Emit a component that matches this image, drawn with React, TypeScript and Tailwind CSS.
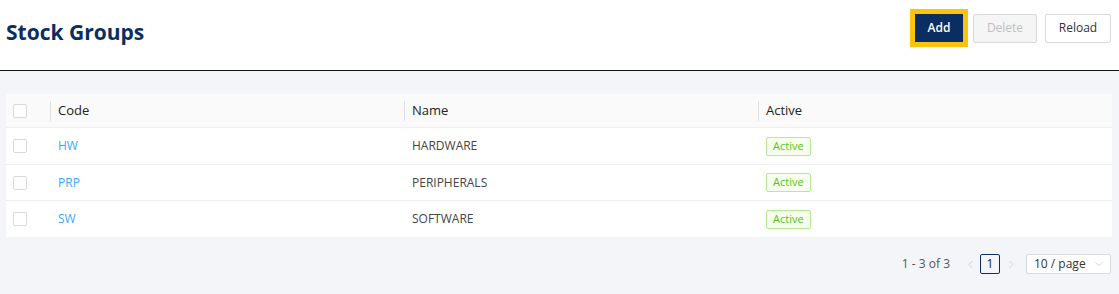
import { ChevronLeft, ChevronRight, ChevronDown } from "lucide-react";

interface StockGroup {
  code: string;
  name: string;
  active: boolean;
}

const rows: StockGroup[] = [
  { code: "HW", name: "HARDWARE", active: true },
  { code: "PRP", name: "PERIPHERALS", active: true },
  { code: "SW", name: "SOFTWARE", active: true },
];

function Checkbox() {
  return (
    <span className="block h-[14px] w-[14px] rounded-[2px] border border-[#d9d9d9] bg-white" />
  );
}

export default function App() {
  return (
    <div className="h-[294px] w-[1119px] overflow-hidden bg-[#f4f5f9] font-['Open_Sans',sans-serif] text-[#333]">
      <header className="flex h-[71px] items-center justify-between border-b border-[#111] bg-white pl-[6px] pr-[8px]">
        <h1 className="-mt-[4px] text-[21px] font-bold text-[#0a2d62]">
          Stock Groups
        </h1>
        <div className="mb-[14px] flex items-center">
          <button className="mr-[10px] h-[28px] w-[48px] bg-[#0a2d62] text-[12px] font-semibold text-white ring-[5px] ring-[#fcc30a]">
            Add
          </button>
          <button className="mr-[8px] h-[29px] w-[64px] rounded-[2px] border border-[#d9d9d9] bg-[#f5f5f5] text-[12px] text-[#bfbfbf]">
            Delete
          </button>
          <button className="h-[29px] w-[66px] rounded-[2px] border border-[#d9d9d9] bg-white text-[12px] text-[#333]">
            Reload
          </button>
        </div>
      </header>

      <main className="px-[6px] pt-[23px]">
        <div className="w-[1106px] bg-white text-[12px]">
          <div className="flex h-[34px] items-center border-b border-[#eeeeee] bg-[#fafafa] text-[13px] text-[#222]">
            <div className="flex w-[44px] items-center pl-[7px]">
              <Checkbox />
            </div>
            <div className="flex w-[354px] items-center">
              <span className="mr-[7px] h-[20px] w-px bg-[#e0e0e0]" />
              Code
            </div>
            <div className="flex w-[354px] items-center">
              <span className="mr-[7px] h-[20px] w-px bg-[#e0e0e0]" />
              Name
            </div>
            <div className="flex w-[354px] items-center">
              <span className="mr-[7px] h-[20px] w-px bg-[#e0e0e0]" />
              Active
            </div>
          </div>
          {rows.map((r, i) => (
            <div
              key={r.code}
              className={
                i === 0
                  ? "flex h-[37px] items-center border-b border-[#eeeeee]"
                  : i < rows.length - 1
                    ? "flex h-[36px] items-center border-b border-[#eeeeee]"
                    : "flex h-[36px] items-center"
              }
            >
              <div className="flex w-[44px] items-center pl-[7px]">
                <Checkbox />
              </div>
              <div className="w-[354px] pl-[8px] text-[#3aaaf5]">{r.code}</div>
              <div className="w-[354px] pl-[8px] text-[#444]">{r.name}</div>
              <div className="w-[354px] pl-[8px]">
                {r.active && (
                  <span className="inline-flex h-[19px] items-center rounded-[2px] border border-[#b7eb8f] bg-[#f6ffed] px-[6px] text-[11px] text-[#52c41a]">
                    Active
                  </span>
                )}
              </div>
            </div>
          ))}
        </div>

        <div className="mt-[17px] flex items-center justify-end pr-[2px] text-[12px]">
          <span className="mr-[14px] text-[#555]">1 - 3 of 3</span>
          <ChevronLeft size={13} strokeWidth={1.2} className="mr-[3px] text-[#c4c4c4]" />
          <span className="flex h-[20px] w-[20px] items-center justify-center rounded-[2px] border border-[#0a2d62] text-[#0a2d62]">
            1
          </span>
          <ChevronRight size={13} strokeWidth={1.2} className="ml-[5px] mr-[8px] text-[#c4c4c4]" />
          <span className="flex h-[20px] w-[85px] items-center justify-between rounded-[2px] border border-[#d9d9d9] bg-white pl-[7px] pr-[4px] text-[#333]">
            10 / page
            <ChevronDown size={14} strokeWidth={1.2} className="text-[#c4c4c4]" />
          </span>
        </div>
      </main>
    </div>
  );
}
